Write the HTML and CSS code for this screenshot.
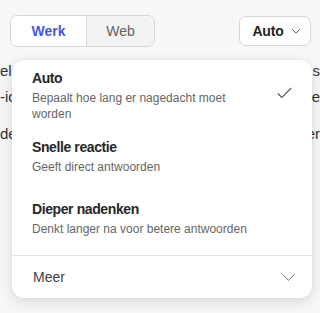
FILE: index.html
```html
<!DOCTYPE html>
<html lang="nl">
<head>
    <meta charset="UTF-8">
    <title>Modus kiezen</title>
    <link rel="stylesheet" href="styles.css">
</head>
<body>
    <section class="page">
        <header class="toolbar">
            <div class="tabs">
                <button class="tab active">Werk</button>
                <button class="tab">Web</button>
            </div>
            <button class="mode-button">
                Auto
                <svg width="8" height="5" viewBox="0 0 8 5"><path d="M0.5 0.5 L4 4 L7.5 0.5" fill="none" stroke="#555" stroke-width="1"/></svg>
            </button>
        </header>

        <div class="content">
            <p class="line"><span>ele</span><span>s</span></p>
            <p class="line"><span>-ic</span><span>ne</span></p>
            <p class="line gap"><span>de</span><span>er</span></p>
        </div>

        <div class="menu">
            <div class="menu-list">
                <div class="menu-item">
                    <div class="menu-text">
                        <h3>Auto</h3>
                        <p>Bepaalt hoe lang er nagedacht moet worden</p>
                    </div>
                    <svg class="check" width="15" height="12" viewBox="0 0 15 12"><path d="M0.8 6.5 L4.8 10.5 L14.2 1" fill="none" stroke="#555" stroke-width="1.1"/></svg>
                </div>
                <div class="menu-item">
                    <div class="menu-text">
                        <h3>Snelle reactie</h3>
                        <p>Geeft direct antwoorden</p>
                    </div>
                </div>
                <div class="menu-item">
                    <div class="menu-text">
                        <h3>Dieper nadenken</h3>
                        <p>Denkt langer na voor betere antwoorden</p>
                    </div>
                </div>
            </div>
            <div class="menu-footer">
                <span>Meer</span>
                <svg width="13" height="7" viewBox="0 0 13 7"><path d="M0.5 0.5 L6.5 6.3 L12.5 0.5" fill="none" stroke="#666" stroke-width="1"/></svg>
            </div>
        </div>
    </section>
</body>
</html>
```

FILE: styles.css
```css
body {
    margin: 0;
    padding: 0;
    background-color: #f7f7f7;
    font-family: "Liberation Sans", Arial, sans-serif;
    color: #242424;
    overflow: hidden;
}

.page {
    position: relative;
    width: 320px;
    height: 313px;
}

.toolbar {
    display: flex;
    justify-content: space-between;
    align-items: center;
    padding: 15px 9px 0 10px;
}

.tabs {
    display: flex;
    border: 1px solid #d6d6d6;
    border-radius: 7px;
    overflow: hidden;
}

.tab {
    font-family: inherit;
    font-size: 14px;
    height: 30px;
    padding: 0;
    border: none;
    background-color: #f3f3f3;
    color: #616161;
    cursor: pointer;
}

.tab:first-child {
    width: 76px;
    border-right: 1px solid #d6d6d6;
}

.tab:last-child {
    width: 67px;
}

.tab.active {
    background-color: #fff;
    color: #4656e0;
    font-weight: 700;
}

.mode-button {
    display: flex;
    align-items: center;
    justify-content: center;
    gap: 8px;
    width: 72px;
    height: 30px;
    padding: 0 0 0 2px;
    font-family: inherit;
    font-size: 14px;
    font-weight: 700;
    letter-spacing: -0.2px;
    color: #242424;
    background-color: #fff;
    border: 1px solid #d6d6d6;
    border-radius: 7px;
}

.content {
    padding-top: 14px;
}

.line {
    display: flex;
    justify-content: space-between;
    margin: 0;
    height: 26px;
    font-size: 15px;
    line-height: 20px;
    color: #333;
}

.line.gap {
    margin-top: 11px;
}

.menu {
    position: absolute;
    left: 12px;
    top: 60px;
    width: 300px;
    background-color: #fff;
    border-radius: 12px;
    box-shadow: 0 4px 14px rgba(0, 0, 0, 0.12), 0 0 2px rgba(0, 0, 0, 0.08);
}

.menu-list {
    padding-bottom: 2px;
}

.menu-item {
    display: flex;
    justify-content: space-between;
    align-items: flex-start;
    box-sizing: border-box;
    min-height: 62px;
    padding: 8px 20px 7px 20px;
}

.menu-text {
    flex: 1;
}

.menu-text h3 {
    margin: 0 0 2px;
    font-size: 14px;
    font-weight: 700;
    line-height: 20px;
    letter-spacing: -0.4px;
    color: #262626;
}

.menu-text p {
    margin: 0;
    font-size: 12px;
    line-height: 16px;
    color: #666;
    max-width: 222px;
}

.check {
    margin-top: 19px;
}

.menu-footer {
    display: flex;
    justify-content: space-between;
    align-items: center;
    height: 42px;
    padding: 0 17px 0 21px;
    border-top: 1px solid #e0e0e0;
    font-size: 14px;
    color: #424242;
}
```
